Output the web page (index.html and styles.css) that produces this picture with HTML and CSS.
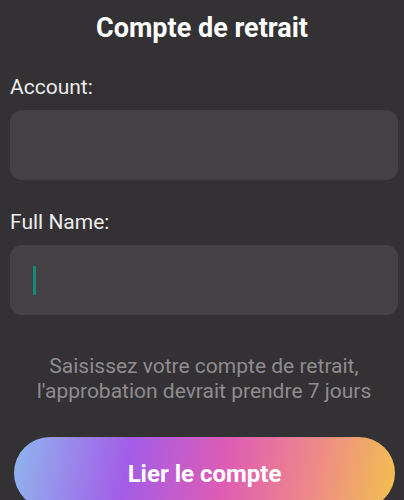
FILE: index.html
```html
<!DOCTYPE html>
<html lang="fr">
<head>
    <meta charset="UTF-8">
    <meta name="viewport" content="width=device-width, initial-scale=1.0">
    <title>Compte de retrait</title>
    <link rel="stylesheet" href="styles.css">
</head>
<body>
    <header class="title">Compte de retrait</header>
    <form class="form">
        <label class="field-label">Account:</label>
        <div class="field"></div>
        <label class="field-label">Full Name:</label>
        <div class="field">
            <span class="cursor"></span>
        </div>
        <p class="hint">Saisissez votre compte de retrait,<br>l'approbation devrait prendre 7 jours</p>
        <button type="button" class="bind-btn">Lier le compte</button>
    </form>
</body>
</html>
```

FILE: styles.css
```css
body {
    margin: 0;
    padding: 0;
    background-color: #333134;
    font-family: Roboto, "Noto Sans", Arial, sans-serif;
    color: #f2f2f2;
    height: 500px;
    overflow: hidden;
}
.title {
    text-align: center;
    font-size: 27px;
    font-weight: bold;
    color: #ffffff;
    padding-top: 12px;
    line-height: 32px;
}
.form {
    display: flex;
    flex-direction: column;
    padding: 0 6px 0 10px;
}
.field-label {
    font-size: 21px;
    line-height: 26px;
    color: #ececec;
}
.form .field-label:first-child {
    margin-top: 30px;
}
.field {
    margin-top: 10px;
    height: 70px;
    background-color: #434144;
    border-radius: 12px;
    display: flex;
    align-items: center;
    padding-left: 23px;
}
.field + .field-label {
    margin-top: 29px;
}
.cursor {
    width: 3px;
    height: 29px;
    background-color: #138a78;
    border-radius: 1px;
}
.hint {
    margin: 39px 0 0;
    text-align: center;
    font-size: 21px;
    line-height: 25px;
    color: #8e8c8f;
}
.bind-btn {
    margin: 33px 3px 0 4px;
    height: 72px;
    border: none;
    border-radius: 36px;
    background: linear-gradient(100deg, #8fb6ee 0%, #a35ce8 30%, #de5cb4 55%, #ee8a88 78%, #f2c14e 100%);
    color: #ffffff;
    font-family: Roboto, "Noto Sans", Arial, sans-serif;
    font-size: 24px;
    font-weight: bold;
    padding-bottom: 0;
    cursor: pointer;
}
```
